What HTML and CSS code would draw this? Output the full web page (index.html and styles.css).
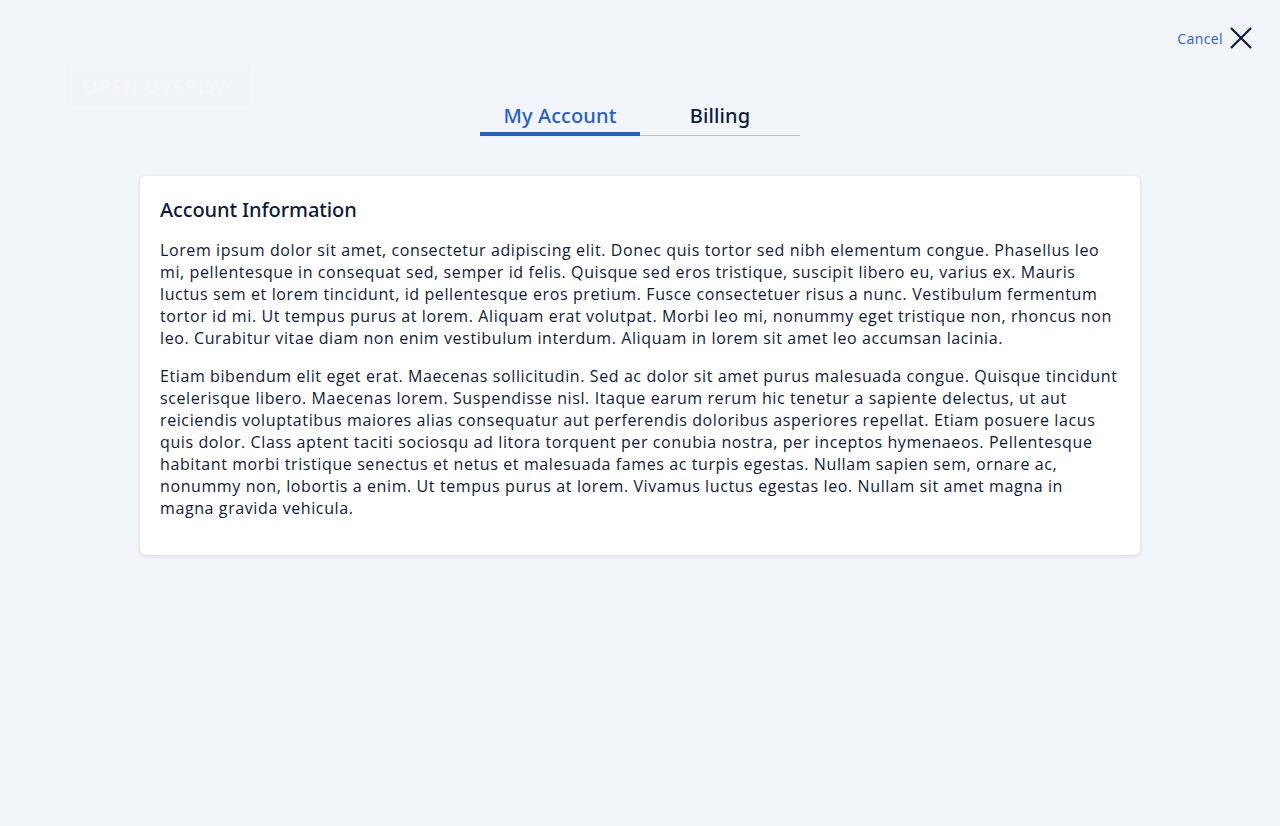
FILE: index.html
```html
<!DOCTYPE html>
<html lang="en">
<head>
<meta charset="utf-8">
<title>Account</title>
<link rel="stylesheet" href="styles.css">
</head>
<body>
<div class="page">
  <button class="open-btn">Open Overlay</button>
  <div class="overlay">
    <div class="topbar">
      <a class="cancel" href="#">Cancel</a>
      <svg class="close-icon" width="22" height="22" viewBox="0 0 22 22"><path d="M1 1 L21 21 M21 1 L1 21" stroke="#0c1b3c" stroke-width="2.2" fill="none" stroke-linecap="butt"/></svg>
    </div>
    <div class="tabs">
      <div class="tab active">My Account</div>
      <div class="tab">Billing</div>
    </div>
    <div class="card">
      <h2 class="card-title">Account Information</h2>
      <p class="card-text">Lorem ipsum dolor sit amet, consectetur adipiscing elit. Donec quis tortor sed nibh elementum congue. Phasellus leo mi, pellentesque in consequat sed, semper id felis. Quisque sed eros tristique, suscipit libero eu, varius ex. Mauris luctus sem et lorem tincidunt, id pellentesque eros pretium. Fusce consectetuer risus a nunc. Vestibulum fermentum tortor id mi. Ut tempus purus at lorem. Aliquam erat volutpat. Morbi leo mi, nonummy eget tristique non, rhoncus non leo. Curabitur vitae diam non enim vestibulum interdum. Aliquam in lorem sit amet leo accumsan lacinia.</p>
      <p class="card-text">Etiam bibendum elit eget erat. Maecenas sollicitudin. Sed ac dolor sit amet purus malesuada congue. Quisque tincidunt scelerisque libero. Maecenas lorem. Suspendisse nisl. Itaque earum rerum hic tenetur a sapiente delectus, ut aut reiciendis voluptatibus maiores alias consequatur aut perferendis doloribus asperiores repellat. Etiam posuere lacus quis dolor. Class aptent taciti sociosqu ad litora torquent per conubia nostra, per inceptos hymenaeos. Pellentesque habitant morbi tristique senectus et netus et malesuada fames ac turpis egestas. Nullam sapien sem, ornare ac, nonummy non, lobortis a enim. Ut tempus purus at lorem. Vivamus luctus egestas leo. Nullam sit amet magna in magna gravida vehicula.</p>
    </div>
  </div>
</div>
</body>
</html>
```
FILE: styles.css
```css
html, body {
  margin: 0;
  padding: 0;
  background: #f2f5f9;
}
body {
  font-family: "Open Sans", "Noto Sans", sans-serif;
  color: #0e1a38;
  width: 1280px;
  height: 826px;
  overflow: hidden;
}
.page {
  position: relative;
  width: 1280px;
  height: 826px;
}
.open-btn {
  position: absolute;
  left: 66px;
  top: 66px;
  width: 185px;
  height: 40px;
  border: none;
  border-radius: 5px;
  background: #edf1f6;
  color: #f6f8fb;
  font-family: "Open Sans", sans-serif;
  font-size: 19px;
  letter-spacing: 1.2px;
  text-transform: uppercase;
  padding: 0;
}
.overlay {
  position: absolute;
  inset: 0;
  background: rgba(242, 245, 249, 0.6);
  display: flex;
  flex-direction: column;
  align-items: center;
}
.topbar {
  align-self: stretch;
  display: flex;
  justify-content: flex-end;
  align-items: center;
  gap: 7px;
  padding: 27px 28px 0 0;
  height: 22px;
}
.cancel {
  color: #2b62c4;
  text-decoration: none;
  font-size: 14px;
  letter-spacing: 0.4px;
  margin-top: 1px;
}
.close-icon {
  display: block;
}
.tabs {
  display: flex;
  margin-top: 54px;
  width: 320px;
  border-bottom: 1px solid #b9c1cd;
}
.tab {
  flex: 1;
  text-align: center;
  font-family: "Noto Sans", "Open Sans", sans-serif;
  font-size: 20px;
  font-weight: 500;
  line-height: 26px;
  padding-bottom: 6px;
  color: #0c1b3c;
  letter-spacing: 0.1px;
}
.tab.active {
  color: #2560c6;
  border-bottom: 4px solid #2560c6;
  margin-bottom: -1px;
  padding-bottom: 3px;
}
.card {
  margin-top: 40px;
  width: 960px;
  padding: 20px 20px 20px;
  background: #ffffff;
  border-radius: 6px;
  box-shadow: 0 1px 4px rgba(30, 45, 80, 0.15);
}
.card-title {
  margin: 0 0 15px;
  font-family: "Noto Sans", "Open Sans", sans-serif;
  font-size: 20px;
  font-weight: 500;
  line-height: 28px;
  color: #0c1b3c;
  letter-spacing: -0.1px;
}
.card-text {
  margin: 0 0 16px;
  font-size: 16px;
  line-height: 22px;
  color: #0e1a38;
  letter-spacing: 0.6px;
}
```
